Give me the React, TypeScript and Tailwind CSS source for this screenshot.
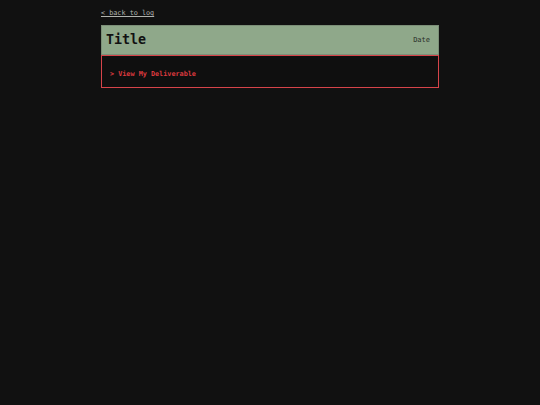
import React from 'react';

export default function App() {
  return (
    <div className="min-h-[405px] w-full bg-[#111111] font-['DejaVu_Sans_Mono',monospace]">
      <div className="mx-auto w-[338px] pt-[8px]">
        <a href="#" className="block w-fit text-[6.8px] leading-[10px] text-[#b0b3ae] underline">
          &lt; back to log
        </a>
        <div className="mt-[7px]">
          <div className="flex h-[30px] items-center justify-between border border-[#7c8f78] bg-[#8fa88a] pl-[4px] pr-[8px]">
            <h1 className="text-[13.3px] font-bold leading-none text-[#111111]">Title</h1>
            <span className="text-[7px] leading-none text-[#2a2f29]">Date</span>
          </div>
          <div className="flex h-[33px] items-center border border-[#d6444a] bg-[#0f0f0f] pl-[8px] pt-[5px]">
            <a href="#" className="text-[6.8px] font-bold leading-none text-[#dc3a3f]">
              &gt; View My Deliverable
            </a>
          </div>
        </div>
      </div>
    </div>
  );
}
